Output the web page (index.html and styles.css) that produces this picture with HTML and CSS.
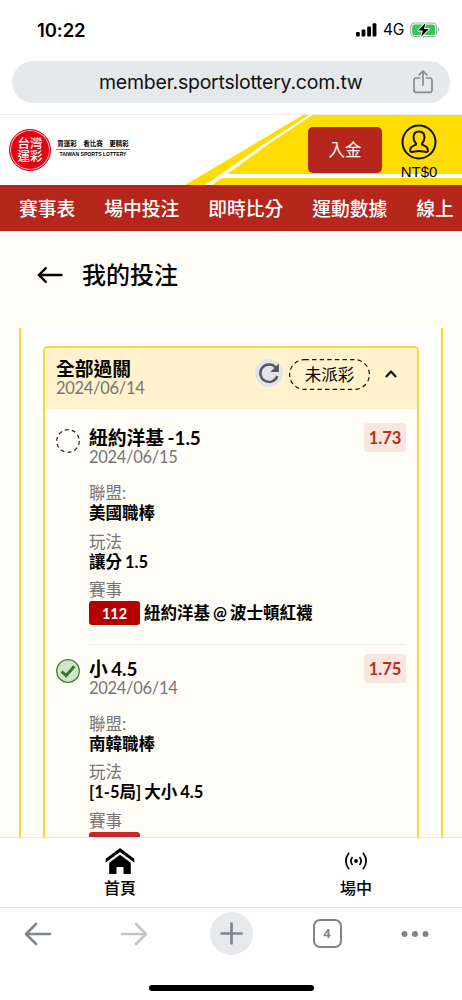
FILE: index.html
```html
<!DOCTYPE html>
<html lang="zh-Hant">
<head>
<meta charset="utf-8">
<meta name="viewport" content="width=device-width, initial-scale=1">
<title>我的投注</title>
<link rel="stylesheet" href="styles.css">
</head>
<body>
<div class="phone">
  <div class="status">
    <span class="time">10:22</span>
    <div class="status-right">
      <svg class="signal" width="21" height="14" viewBox="0 0 21 14"><rect x="0" y="9" width="3.8" height="4.5" rx="1"/><rect x="5.6" y="6.6" width="3.8" height="6.9" rx="1"/><rect x="11.2" y="3.6" width="3.8" height="9.9" rx="1"/><rect x="16.6" y="0.3" width="3.8" height="13.2" rx="1"/></svg>
      <span class="net">4G</span>
      <svg class="battery" width="30" height="16" viewBox="0 0 30 16"><rect x=".7" y="1" width="26" height="13.6" rx="4" fill="#fff" stroke="#aaa" stroke-width="1.2"/><rect x="2.2" y="2.5" width="23" height="10.6" rx="2.6" fill="#34c759"/><path d="M28 5.7q2.7 2.1 0 4.2z" fill="#aaa"/><path d="M15.5.9 8.2 8.6h4.6l-1.6 6.2 7.6-7.9h-4.8z" fill="#000" stroke="#fff" stroke-width="1.8" paint-order="stroke" stroke-linejoin="round"/></svg>
    </div>
  </div>
  <div class="address">
    <div class="pill">
      <span class="url">member.sportslottery.com.tw</span>
      <svg class="share" width="20" height="24" viewBox="0 0 20 24" fill="none" stroke="#868b8f" stroke-width="1.7" stroke-linecap="round" stroke-linejoin="round"><path d="M6.6 8H3.2A2.2 2.2 0 0 0 1 10.2v10A2.2 2.2 0 0 0 3.2 22.4h13.6a2.2 2.2 0 0 0 2.2-2.2v-10A2.2 2.2 0 0 0 16.8 8h-3.4M10 15V1.2M6.1 4.8 10 1l3.9 3.8"/></svg>
    </div>
  </div>
  <header class="site-header">
    <svg class="stripes" width="462" height="70" viewBox="0 0 462 70"><path d="M303 0H462V70H185z" fill="#fd0"/><path d="M309 0h3.500L270 28 212 70h-7L270 25z" fill="#fff"/><path d="M226 59H462v4H219z" fill="#fff"/></svg>
    <div class="logo"><span class="seal"><span>台灣</span><span>運彩</span></span>
      <div class="logo-text"><span class="slogan">買運彩　看比賽　更精彩</span><span class="latin">TAIWAN SPORTS LOTTERY</span></div>
    </div>
    <div class="account">
      <button class="deposit">入金</button>
      <div class="user">
        <svg width="36" height="36" viewBox="0 0 36 36" fill="none" stroke="#111" stroke-width="2"><circle cx="18" cy="18" r="16.5"/><path d="M18 7.500c-3.500 0-5.500 2.400-5.500 5.800 0 2.300.8 4.200 2.200 5.700.7.800.5 1.600-.5 2-2.700 1-5.100 1.700-5.100 5.400 0 1.200.7 1.600 1.900 1.500 2.500-.2 4.300-1 7-1s4.500.8 7 1c1.200.1 1.900-.3 1.900-1.500 0-3.700-2.400-4.400-5.100-5.400-1-.4-1.200-1.200-.5-2 1.400-1.500 2.200-3.400 2.200-5.700 0-3.400-2-5.800-5.500-5.800z"/></svg>
        <span>NT$0</span>
      </div>
    </div>
  </header>
  <nav class="tabs"><span>賽事表</span><span>場中投注</span><span>即時比分</span><span>運動數據</span><span>線上</span></nav>
  <main class="content">
    <h1 class="page-title">
      <svg width="26" height="18" viewBox="0 0 26 18" fill="none" stroke="#000" stroke-width="2.4" stroke-linecap="round"><path d="M24.5 9H2.500M8.800 2.200 2 9l6.800 6.800"/></svg>
      <span>我的投注</span>
    </h1>
    <div class="outer">
      <section class="card">
        <div class="card-head">
          <div class="card-name"><b>全部過關</b><span class="date">2024/06/14</span></div>
          <svg class="refresh" width="28" height="28" viewBox="0 0 28 28"><circle cx="14" cy="14" r="14" fill="#e2e3e6"/><path d="M20.500 8.300A8.700 8.700 0 1 0 22.300 17" fill="none" stroke="#55575b" stroke-width="2.400"/><path d="M23.900 4.500v8.600h-8.600z" fill="#55575b"/></svg>
          <div class="pending"><svg width="81" height="31" viewBox="0 0 81 31"><rect x=".6" y=".6" width="79.8" height="29.8" rx="14.9"/></svg><span>未派彩</span></div>
          <svg class="chevron" width="12" height="8" viewBox="0 0 12 8" fill="none" stroke="#111" stroke-width="2.2"><path d="M.9 7 6 1.600 11.100 7"/></svg>
        </div>
        <article class="bet">
          <svg class="mark" width="24" height="24" viewBox="0 0 24 24"><circle cx="12" cy="12" r="11.3" fill="none" stroke="#222" stroke-width="1.2" stroke-dasharray="3.9 3.2"/></svg>
          <div class="bet-main">
            <div class="bet-top"><div><b>紐約洋基 -1.5</b><span class="date">2024/06/15</span></div><span class="odds">1.73</span></div>
            <dl><dt>聯盟:</dt><dd>美國職棒</dd><dt>玩法</dt><dd>讓分 1.5</dd><dt>賽事</dt><dd class="match"><span class="num">112</span><span>紐約洋基 @ 波士頓紅襪</span></dd></dl>
          </div>
        </article>
        <article class="bet">
          <svg class="mark" width="24" height="24" viewBox="0 0 24 24"><circle cx="12" cy="12" r="11.3" fill="#d5e3cc" stroke="#3b8230" stroke-width="1.3"/><path d="m5.600 12.500 4.500 4.200 8.200-9.400" fill="none" stroke="#2f7a25" stroke-width="3"/></svg>
          <div class="bet-main">
            <div class="bet-top"><div><b>小 4.5</b><span class="date">2024/06/14</span></div><span class="odds">1.75</span></div>
            <dl><dt>聯盟:</dt><dd>南韓職棒</dd><dt>玩法</dt><dd>[1-5局] 大小 4.5</dd><dt>賽事</dt><dd class="match"><span class="num faded"></span></dd></dl>
          </div>
        </article>
      </section>
    </div>
  </main>
  <footer class="site-nav">
    <div class="nav-item"><svg width="30" height="26" viewBox="0 0 30 26"><path d="M15 0 .7 10.700v3.800L15 3.900l14.300 10.600v-3.800z"/><path d="M15 6.800 4.200 14.800V26h7.300v-7h7v7h7.300V14.800z"/></svg><span>首頁</span></div>
    <div class="nav-item"><svg width="24" height="26" viewBox="0 0 24 26" fill="none" stroke="#000" stroke-width="1.7"><circle cx="12" cy="13" r="1.9" fill="#000" stroke="none"/><path d="M8.500 9q-3.300 4 0 8M15.500 9q3.300 4 0 8M5 4.800q-6.300 8.200 0 16.400M19 4.800q6.300 8.200 0 16.400"/></svg><span>場中</span></div>
  </footer>
  <div class="browser-bar">
    <div><svg width="28" height="24" viewBox="0 0 28 24" fill="none" stroke="#7f868b" stroke-width="2.6" stroke-linecap="round" stroke-linejoin="round"><path d="M26 12H2M12 2 2 12l10 10"/></svg></div>
    <div><svg width="28" height="24" viewBox="0 0 28 24" fill="none" stroke="#c6c6c6" stroke-width="2.6" stroke-linecap="round" stroke-linejoin="round"><path d="M2 12h24M16 2l10 10-10 10"/></svg></div>
    <div><svg width="43" height="43" viewBox="0 0 43 43"><circle cx="21.5" cy="21.5" r="21.5" fill="#e8e9ed"/><path d="M11.500 21.500h20M21.500 11.500v20" stroke="#7f868b" stroke-width="2.7" stroke-linecap="round"/></svg></div>
    <div><span class="count">4</span></div>
    <div><svg width="28" height="6" viewBox="0 0 28 6" fill="#7f868b"><circle cx="3.5" cy="3" r="3"/><circle cx="14" cy="3" r="3"/><circle cx="24.5" cy="3" r="3"/></svg></div>
  </div>
  <div class="home-area"><div class="home-bar"></div></div>
</div>
</body>
</html>
```
FILE: styles.css
```css
* { box-sizing: border-box; }
body { margin: 0; font-family: Lato, "Noto Sans CJK TC", sans-serif; color: #000; background: #fff; }
svg { display: block; flex: none; }
.phone { display: flex; flex-direction: column; width: 462px; height: 1000px; overflow: hidden; }
.status { flex: none; height: 61px; padding: 0 22px 2px 37px; display: flex; align-items: center; justify-content: space-between; font-family: Inter, sans-serif; }
.time { font-size: 18.5px; font-weight: 600; letter-spacing: -.1px; }
.status-right { display: flex; align-items: center; gap: 6px; }
.net { font-size: 15.5px; letter-spacing: -.3px; }
.address { flex: none; height: 54px; padding: 0 12px; border-bottom: 1px solid #eee; }
.pill { height: 42px; border-radius: 21px; background: #e6e9ec; display: flex; align-items: center; justify-content: space-between; padding: 0 17px 0 87px; }
.url { font-family: Inter, sans-serif; font-size: 19.5px; letter-spacing: -.24px; color: #111; white-space: nowrap; }
.site-header { flex: none; position: relative; height: 70px; display: flex; justify-content: space-between; padding: 0 24px 0 9px; }
.stripes { position: absolute; inset: 0; z-index: -1; }
.logo { display: flex; gap: 5px; align-items: center; height: 70px; }
.seal { width: 42px; height: 42px; border-radius: 50%; background: #e60012; border: 1px solid #e60012; box-shadow: inset 0 0 0 1px #f8c8c8; color: #fff; font-size: 12.5px; line-height: 13px; font-weight: 500; display: flex; flex-direction: column; align-items: center; justify-content: center; }
.logo-text { width: 74px; display: flex; flex-direction: column; align-items: center; margin-top: -3px; }
.slogan { font-size: 6.5px; line-height: 11px; font-weight: 700; white-space: nowrap; border-bottom: 1px solid #888; width: 74px; text-align: center; }
.latin { font-family: "Liberation Sans", sans-serif; font-size: 5.1px; line-height: 9px; font-weight: 700; white-space: nowrap; }
.account { display: flex; gap: 18px; padding-top: 12px; }
.deposit { width: 74px; height: 46px; border: 0; border-radius: 5px; background: #b5261c; color: #fff; font-family: inherit; font-size: 16.5px; padding: 0 0 2px; }
.user { width: 38px; display: flex; flex-direction: column; align-items: center; margin-top: -3px; font-family: "Liberation Sans", sans-serif; font-size: 15px; line-height: 24px; white-space: nowrap; }
.tabs { flex: none; height: 46px; background: #b5261c; color: #fff; display: flex; align-items: center; gap: 28.9px; padding: 0 0 2px 19px; font-size: 18.8px; font-weight: 500; white-space: nowrap; }
.content { flex: none; height: 605.5px; overflow: hidden; background: #fffdf5; }
.page-title { margin: 0; height: 97px; padding: 0 0 9px 37px; display: flex; align-items: center; gap: 19px; font-size: 24px; font-weight: 500; }
.page-title span { margin-top: -3px; }
.outer { margin: 0 19px; background: #fff; border: solid #fdd835; border-width: 0 2px; padding: 18px 22px 0; height: 520px; }
.card { border: 2px solid #fdd835; border-radius: 5px; background: #fffdf5; height: 600px; }
.card-head { height: 61px; background: #fff2cc; display: flex; align-items: center; padding: 0 20px 0 11px; border-radius: 3px 3px 0 0; }
.card-name { flex: 1; margin-top: -1px; }
.card-name b, .bet-top b { display: block; font-size: 18.8px; line-height: 20px; font-weight: 700; word-spacing: -1.2px; white-space: nowrap; }
.date { display: block; font-size: 16.5px; line-height: 19px; letter-spacing: -.3px; color: #757575; }
.refresh { margin: -11px 6px 0 0; }
.pending { width: 81px; height: 31px; display: grid; place-items: center; margin: -9px 15px 0 0; font-size: 16.5px; }
.pending > * { grid-area: 1 / 1; }
.pending rect { fill: none; stroke: #111; stroke-width: 1.2; stroke-dasharray: 4.3 3.3; }
.chevron { margin-top: -10px; }
.bet { display: flex; gap: 9.5px; padding: 0 12px 0 10.5px; height: 230.5px; }
.mark { margin-top: 19.5px; }
.bet-main { flex: 1; height: 236px; padding-top: 19px; border-bottom: 1.5px solid #ecebe7; margin-right: 1px; }
.bet-top { display: flex; justify-content: space-between; }
.odds { width: 42px; height: 29px; margin: -5px -2px 0 0; border-radius: 4px; background: #f8e6df; color: #b92d20; font-size: 16.5px; line-height: 30px; font-weight: 700; text-align: center; }
dl { margin: 16px 0 0; font-size: 16.5px; line-height: 20px; }
dt { color: #757575; }
dd { margin: 0 0 8.6px; font-weight: 700; word-spacing: -1px; white-space: nowrap; }
.match { display: flex; align-items: center; gap: 4px; height: 24px; margin-top: 1px; }
.num { width: 51px; height: 24px; border-radius: 3px; background: #b50000; color: #fff; font-size: 14.5px; line-height: 25px; text-align: center; }
.faded { background: #c62828; }
.site-nav { flex: none; height: 71.5px; background: #fff; border-top: 1px solid #e6e6e6; border-bottom: 1px solid #e2e2e2; display: flex; justify-content: space-between; padding: 10.5px 86px 0 100px; }
.nav-item { width: 40px; display: flex; flex-direction: column; align-items: center; font-size: 16px; line-height: 28px; font-weight: 500; white-space: nowrap; }
.browser-bar { flex: none; height: 51px; display: grid; grid-template-columns: 75px 118px 76px 116px 60px; justify-content: start; align-items: center; }
.browser-bar > div { display: flex; justify-content: center; }
.count { width: 29px; height: 29px; border: 2.5px solid #7f868b; border-radius: 7px; color: #7f868b; font: 700 13px/24px "Open Sans", sans-serif; text-align: center; }
.home-area { flex: 1; display: flex; justify-content: center; padding-top: 26px; }
.home-bar { width: 165px; height: 6px; border-radius: 3px; background: #000; }
```
